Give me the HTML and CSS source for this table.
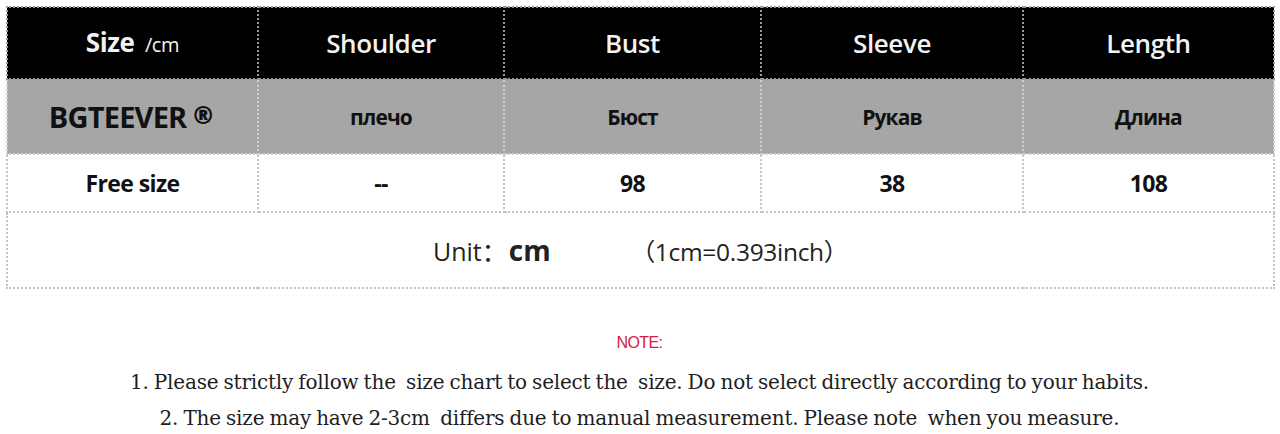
FILE: index.html
```html
<!DOCTYPE html>
<html>
<head>
<meta charset="utf-8">
<link rel="stylesheet" href="styles.css">
</head>
<body>
<div class="page">
  <table class="chart">
    <colgroup>
      <col class="c1"><col class="c2"><col class="c3"><col class="c4"><col class="c5">
    </colgroup>
    <tr class="head">
      <td><span class="size">Size</span> <span class="unit">/cm</span></td>
      <td>Shoulder</td>
      <td>Bust</td>
      <td>Sleeve</td>
      <td>Length</td>
    </tr>
    <tr class="ru">
      <td class="brand">BGTEEVER <span class="reg">®</span></td>
      <td>плечо</td>
      <td>Бюст</td>
      <td>Рукав</td>
      <td>Длина</td>
    </tr>
    <tr class="data">
      <td>Free size</td>
      <td>--</td>
      <td>98</td>
      <td>38</td>
      <td>108</td>
    </tr>
    <tr class="unitrow">
      <td colspan="5"><span class="ulabel">Unit<span class="fw">：</span></span><span class="ucm">cm</span><span class="uconv"><span class="fw">（</span>1cm=0.393inch<span class="fw">）</span></span></td>
    </tr>
  </table>
  <div class="notes">
    <p class="note">NOTE:</p>
    <p class="line">1. Please strictly follow the&nbsp; size chart to select the&nbsp; size. Do not select directly according to your habits.</p>
    <p class="line">2. The size may have 2-3cm&nbsp; differs due to manual measurement. Please note&nbsp; when you measure.</p>
  </div>
</div>
</body>
</html>
```
FILE: styles.css
```css
html, body {
  margin: 0;
  padding: 0;
  background: #fff;
}
.page {
  padding: 6px 7px 0 6px;
  width: 1267px;
}
.chart {
  width: 1267px;
  border-collapse: collapse;
  table-layout: fixed;
  font-family: "Open Sans", "DejaVu Sans", sans-serif;
  border: 2px dotted #bdbdbd;
}
.c1 { width: 251px; }
.c2 { width: 246px; }
.c3 { width: 257px; }
.c4 { width: 262px; }
.c5 { width: 251px; }
.chart td {
  text-align: center;
  vertical-align: middle;
  border: 2px dotted #c4c4c4;
  padding: 0;
}
.head td {
  background: #000;
  color: #f2f2f2;
  height: 70px;
  font-size: 26px;
  font-weight: 600;
  letter-spacing: -0.4px;
  border-color: #9a9a9a;
  line-height: 30px;
}
.head .size { font-weight: 700; }
.head .unit { font-size: 20px; font-weight: 400; margin-left: 4px; }
.ru td {
  background: #a6a6a6;
  color: #111;
  height: 73px;
  font-size: 21px;
  font-weight: 700;
  letter-spacing: -0.9px;
  border-color: #d0d0d0;
}
.ru .brand {
  font-size: 29px;
  letter-spacing: -0.8px;
  padding-right: 4px;
}
.ru .reg { font-size: 24px; font-weight: 800; vertical-align: 4px; }
.data td {
  background: #fff;
  color: #111;
  height: 56px;
  font-size: 23px;
  font-weight: 700;
  letter-spacing: -0.6px;
}
.unitrow td {
  height: 74px;
  font-size: 25px;
  color: #222;
}
.fw { font-family: "Noto Sans CJK SC", sans-serif; }
.ulabel { font-weight: 400; }
.ucm { font-weight: 700; font-size: 28px; margin-right: 80px; margin-left: 2px; }
.uconv { font-weight: 400; font-size: 24.5px; letter-spacing: -0.3px; }
.notes {
  padding-top: 41px;
  text-align: center;
  font-family: "DejaVu Serif", "Liberation Serif", serif;
  color: #1e1e1e;
}
.notes p { margin: 0; }
.note {
  font-family: "Liberation Sans", "DejaVu Sans", sans-serif;
  color: #d6203a;
  font-size: 16px;
  letter-spacing: -0.6px;
  height: 26px;
  line-height: 26px;
  margin-bottom: 8px !important;
}
.line {
  font-size: 20px;
  line-height: 36px;
  letter-spacing: -0.2px;
  word-spacing: -1px;
}
```
